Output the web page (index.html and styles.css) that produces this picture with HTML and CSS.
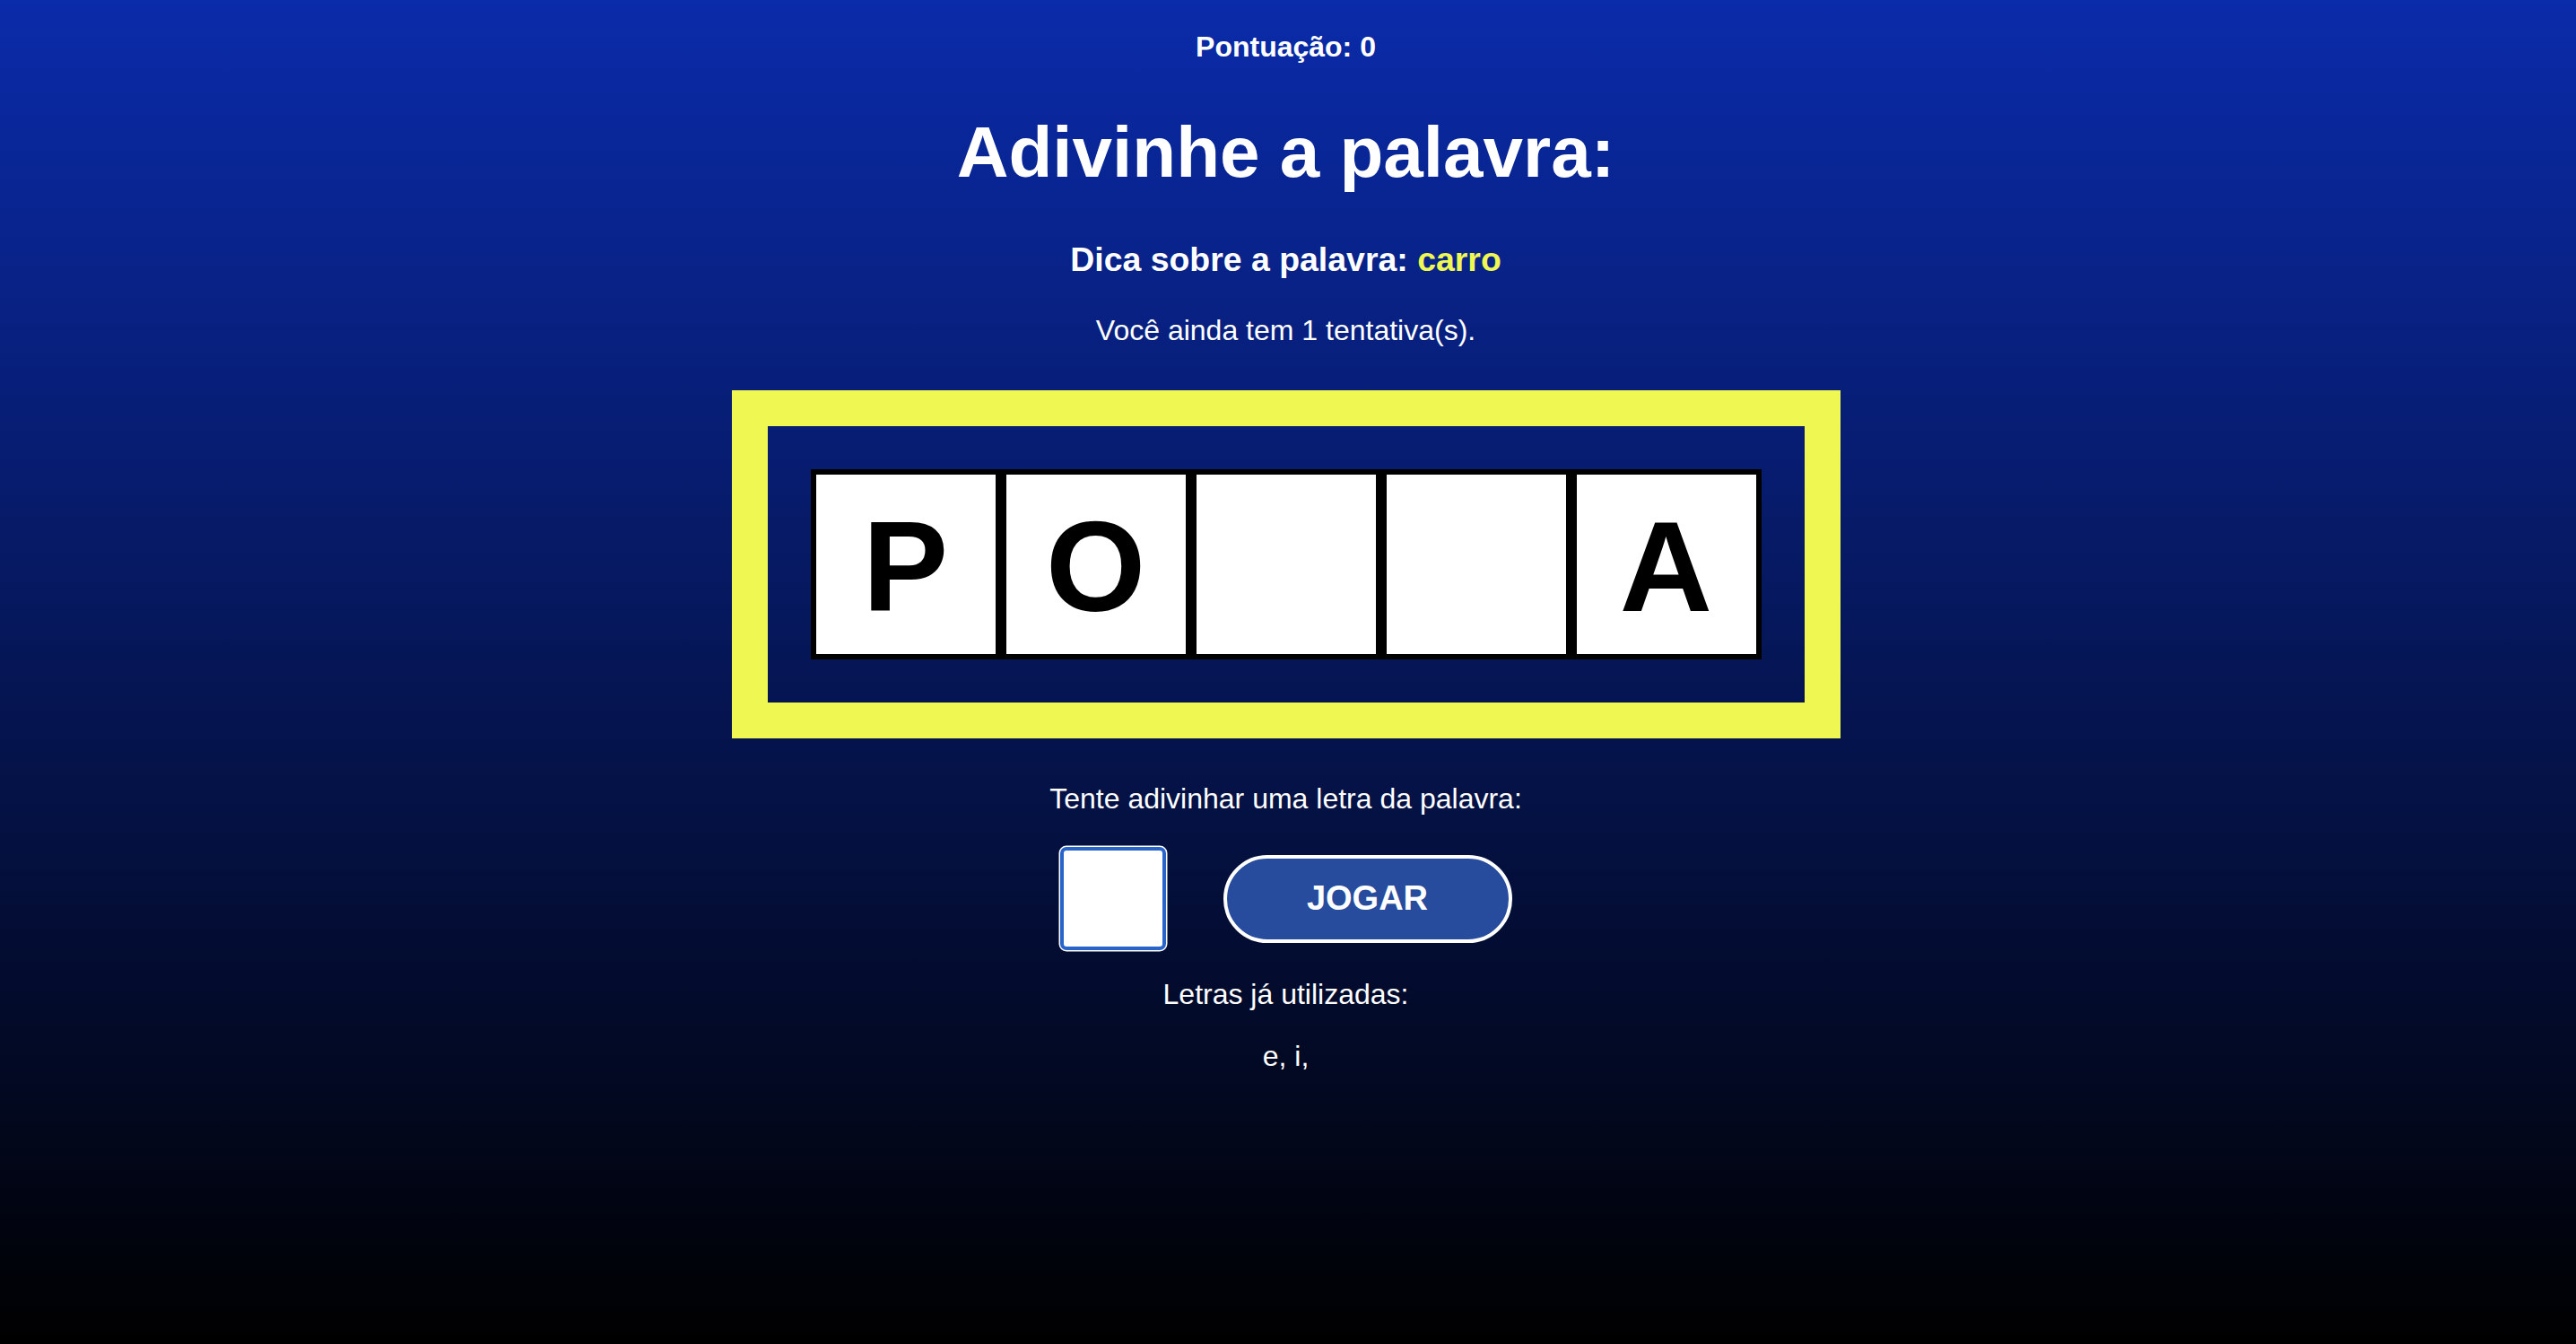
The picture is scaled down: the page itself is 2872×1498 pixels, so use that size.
FILE: index.html
```html
<!DOCTYPE html>
<html lang="pt-BR">
<head>
<meta charset="utf-8">
<title>Adivinhe a palavra</title>
<link rel="stylesheet" href="styles.css">
</head>
<body>
<main class="game">
  <p class="score">Pontuação: 0</p>
  <h1 class="title">Adivinhe a palavra:</h1>
  <h3 class="hint">Dica sobre a palavra: <span class="hint-word">carro</span></h3>
  <p class="attempts">Você ainda tem 1 tentativa(s).</p>
  <div class="board">
    <div class="cells">
      <div class="cell">P</div>
      <div class="cell">O</div>
      <div class="cell"></div>
      <div class="cell"></div>
      <div class="cell">A</div>
    </div>
  </div>
  <p class="prompt">Tente adivinhar uma letra da palavra:</p>
  <div class="controls">
    <input class="letter-input" type="text" maxlength="1">
    <button class="play-btn" type="button">JOGAR</button>
  </div>
  <p class="used-label">Letras já utilizadas:</p>
  <p class="used-list">e, i,</p>
</main>
</body>
</html>
```

FILE: styles.css
```css
html, body {
  margin: 0;
  padding: 0;
}

body {
  min-height: 100vh;
  background: linear-gradient(to bottom, #0a2baa 0%, #000000 100%);
  font-family: "Liberation Sans", Arial, Helvetica, sans-serif;
  color: #ffffff;
}

.game {
  display: flex;
  flex-direction: column;
  align-items: center;
  padding-top: 34px;
  padding-right: 5px;
  text-align: center;
}

.score {
  margin: 0;
  font-size: 32px;
  font-weight: bold;
  line-height: 36px;
}

.title {
  margin: 54px 0 0;
  font-size: 80px;
  font-weight: bold;
  line-height: 92px;
}

.hint {
  margin: 52px 0 0;
  font-size: 37.44px;
  font-weight: bold;
  line-height: 43px;
}

.hint-word {
  color: #eff752;
}

.attempts {
  margin: 39px 0 0;
  font-size: 32px;
  line-height: 36px;
}

.board {
  margin-top: 49px;
  border: 40px solid #eff752;
  padding: 48px;
}

.cells {
  display: flex;
}

.cell {
  width: 200px;
  height: 200px;
  border: 6px solid #000000;
  background: #ffffff;
  color: #000000;
  font-size: 143px;
  font-weight: bold;
  line-height: 206px;
  text-align: center;
}

.prompt {
  margin: 49px 0 0;
  font-size: 32px;
  line-height: 36px;
}

.controls {
  margin-top: 36px;
  display: flex;
  align-items: center;
  gap: 64px;
}

.letter-input {
  box-sizing: border-box;
  width: 118px;
  height: 115px;
  margin: 0;
  padding: 0;
  border: 4px solid #2965c8;
  border-radius: 7px;
  box-shadow: 0 0 0 1.5px #ffffff;
  background: #ffffff;
  font-family: inherit;
  font-size: 48px;
  text-align: center;
  outline: none;
}

.play-btn {
  box-sizing: border-box;
  width: 322px;
  height: 98px;
  margin: 0;
  border: 4px solid #ffffff;
  border-radius: 49px;
  background: #274c9d;
  color: #ffffff;
  font-family: inherit;
  font-size: 38px;
  font-weight: bold;
  cursor: pointer;
}

.used-label {
  margin: 31px 0 0;
  font-size: 32px;
  line-height: 36px;
}

.used-list {
  margin: 33px 0 0;
  font-size: 32px;
  line-height: 36px;
}
```
